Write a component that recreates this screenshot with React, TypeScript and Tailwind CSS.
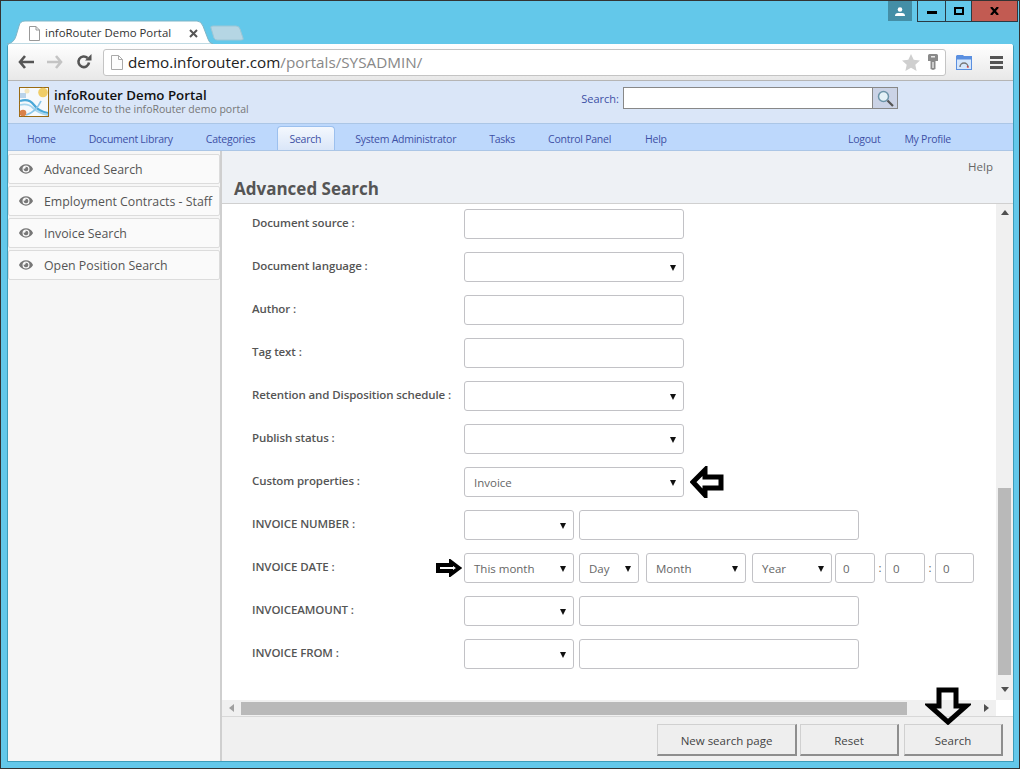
import React from 'react';
import { FaEye } from 'react-icons/fa';

const font = { fontFamily: '"Open Sans", "Noto Sans", sans-serif' };

function Caret({ className = '' }: { className?: string }) {
  return (
    <svg width="6" height="7" viewBox="0 0 6 7" className={className}>
      <path d="M0 1h6L3 7z" fill="#111" />
    </svg>
  );
}

function Select({ value, width }: { value?: string; width: string }) {
  return (
    <div className={`${width} h-[30px] shrink-0 rounded-[3px] border border-[#c2c2c6] bg-white flex items-center justify-between pl-[9px] pr-[7px] text-[11.5px] text-[#666]`}>
      <span className="pt-[2px]">{value}</span>
      <Caret />
    </div>
  );
}

function TextBox({ value, width }: { value?: string; width: string }) {
  return (
    <div className={`${width} h-[30px] shrink-0 rounded-[3px] border border-[#c2c2c6] bg-white flex items-center px-[7px] pt-[2px] text-[11.5px] text-[#666]`}>
      {value}
    </div>
  );
}

function Row({ label, children }: { label: string; children: React.ReactNode }) {
  return (
    <div className="flex h-[30px] items-start mb-[13px]">
      <div className="w-[212px] shrink-0 text-[11.5px] tracking-[-0.1px] leading-[28px] font-semibold text-[#555] whitespace-nowrap">{label}</div>
      {children}
    </div>
  );
}

function SideItem({ label }: { label: string }) {
  return (
    <div className="h-[30px] mb-[2px] rounded-[2px] border border-[#dcdcdc] bg-[#fafafa] flex items-center pl-[10px] text-[12.350px] text-[#555] whitespace-nowrap">
      <FaEye className="w-[14px] h-[14px] text-[#777] mr-[11px] shrink-0" />
      <span className="pt-[3px]">{label}</span>
    </div>
  );
}

function NavLink({ label, className = '' }: { label: string; className?: string }) {
  return <span className={`text-[10.5px] tracking-[-0.25px] text-[#3d50a5] whitespace-nowrap ${className}`}>{label}</span>;
}

function FooterButton({ label, width }: { label: string; width: string }) {
  return (
    <div className={`${width} h-[32px] pt-[2px] flex items-center justify-center bg-[#eeeeee] border border-[#d0d0d0] border-r-2 border-b-2 border-r-[#8e8e8e] border-b-[#8e8e8e] text-[11.5px] text-[#444]`}>
      {label}
    </div>
  );
}

// hand-drawn outline arrows sitting on top of the page
function Arrow({ d, className, width, height, stroke = 4 }: { d: string; className: string; width: number; height: number; stroke?: number }) {
  return (
    <svg width={width} height={height} viewBox={`0 0 ${width} ${height}`} className={`absolute ${className}`}>
      <path d={d} fill="none" stroke="#000" strokeWidth={stroke} strokeLinejoin="miter" />
    </svg>
  );
}

export default function App() {
  return (
    <div style={font} className="relative w-[1020px] h-[769px] overflow-hidden bg-[#63c8ea] border border-[#333] flex flex-col">
      {/* tab strip */}
      <div className="h-[43px] shrink-0 relative">
        <svg width="240" height="24" viewBox="0 0 240 24" className="absolute left-[5px] top-[19px]">
          <path d="M207 6h23q3 0 4 3l3 9q1 2-2 2h-24q-2 0-3-2l-3-10q-1-2 2-2z" fill="#b5d6e4" stroke="#9cc6d6" />
          <path d="M1 24q7-1 9-8l3-10q1-5 6-5h172q4 0 6 5l5 13q1 4 5 5z" fill="#fff" stroke="#7fb5c7" />
        </svg>
        <div className="absolute left-[27px] top-[24px] flex items-center h-[16px]">
          <svg width="13" height="15" viewBox="0 0 13 15">
            <path d="M1.500.5h6.500l3.500 3.500v10.500h-10z M8 .5v3.500h3.500" fill="#fff" stroke="#999" />
          </svg>
          <span className="ml-[4px] text-[11.400px] text-[#333] whitespace-nowrap">infoRouter Demo Portal</span>
        </div>
        <svg width="9" height="9" viewBox="0 0 9 9" className="absolute left-[188px] top-[28px]">
          <path d="M1 1l7 7M8 1l-7 7" stroke="#555" strokeWidth="2" />
        </svg>
        {/* window buttons */}
        <div className="absolute left-[887px] top-0 w-[24px] h-[20px] bg-[#448ea6] flex items-center justify-center">
          <svg width="10" height="9" viewBox="0 0 10 9">
            <circle cx="5" cy="2.500" r="2.300" fill="#fff" />
            <path d="M0 9q0-3 3-3h4q3 0 3 3z" fill="#fff" />
          </svg>
        </div>
        <div className="absolute left-[916px] top-0 flex h-[21px] border border-t-0 border-[#2a3a44]">
          <div className="w-[28px] flex items-center justify-center border-r border-[#2a3a44]">
            <div className="w-[10px] h-[3px] bg-black mt-[3px]" />
          </div>
          <div className="w-[25px] flex items-center justify-center">
            <div className="w-[10px] h-[8px] border-2 border-black" />
          </div>
          <div className="w-[46px] bg-[#c25b52] flex items-center justify-center border-l border-[#2a3a44]">
            <svg width="9" height="8" viewBox="0 0 9 8">
              <path d="M1 0l7 8M8 0l-7 8" stroke="#000" strokeWidth="2.200" />
            </svg>
          </div>
        </div>
      </div>

      {/* browser frame */}
      <div className="ml-[6px] mr-[5px] h-[718px] shrink-0 flex flex-col rounded-t-[3px] overflow-hidden border-l border-r border-b border-[#3c9cb9] bg-white">
        {/* toolbar */}
        <div className="h-[37px] shrink-0 flex items-center bg-gradient-to-b from-[#ffffff] to-[#e8e8e8] border-b border-[#b5b5b5]">
          <svg width="16" height="14" viewBox="0 0 16 14" className="ml-[10px]">
            <path d="M7 1L2 7l5 6M2 7h14" fill="none" stroke="#555" strokeWidth="2.600" />
          </svg>
          <svg width="16" height="14" viewBox="0 0 16 14" className="ml-[13px]">
            <path d="M9 1l5 6-5 6M14 7H0" fill="none" stroke="#c4c4c4" strokeWidth="2.600" />
          </svg>
          <svg width="16" height="16" viewBox="0 0 16 16" className="ml-[13px]">
            <path d="M13 8.500A5.300 5.300 0 1 1 11.500 4" fill="none" stroke="#555" strokeWidth="2.600" />
            <path d="M9 6.500h6.500V0z" fill="#555" />
          </svg>
          <div className="ml-[11px] w-[843px] h-[27px] bg-white border border-[#c4c4c4] rounded-[3px] flex items-center pl-[7px] pr-[7px]">
            <svg width="12" height="15" viewBox="0 0 12 15">
              <path d="M.5.500h7l4 4v10h-11z M7.500.500v4h4" fill="#fdfdfd" stroke="#aaa" />
            </svg>
            <span className="ml-[5px] text-[15.250px] text-[#222] whitespace-nowrap">demo.inforouter.com<span className="text-[#888]">/portals/SYSADMIN/</span></span>
            <svg width="18" height="17" viewBox="0 0 18 17" className="ml-auto">
              <path d="M9 0l2.700 5.800 6.300.7-4.700 4.200 1.300 6.300L9 13.800 3.400 17l1.300-6.300L0 6.500l6.300-.7z" fill="#cfcfcf" />
            </svg>
            <svg width="10" height="16" viewBox="0 0 10 16" className="ml-[8px]">
              <path d="M1.500 0h7Q10 0 10 1.500V7H7.500v8L5 16l-2.500-1V7H0V1.500Q0 0 1.500 0z" fill="#8a8a8a" />
              <path d="M4.300 8h1.400v6H4.300zM3 2h4v1.500H3z" fill="#e8e8e8" />
            </svg>
          </div>
          <svg width="16" height="15" viewBox="0 0 16 15" className="ml-[10px]">
            <rect x=".5" y="1.500" width="15" height="13" fill="#d5e6fb" stroke="#5a8fe0" />
            <path d="M.5 0h7v1.500h8v3H.5z" fill="#5a8fe0" />
            <path d="M4 12a4 4 0 0 1 8 0" fill="none" stroke="#777" strokeWidth="1.500" />
            <path d="M11 11.500l1.500 1" stroke="#d33" strokeWidth="1.500" />
          </svg>
          <div className="ml-[18px] w-[13px] flex flex-col gap-[2px]">
            <div className="h-[3px] bg-[#555]" />
            <div className="h-[3px] bg-[#555]" />
            <div className="h-[3px] bg-[#555]" />
          </div>
        </div>

        {/* portal header */}
        <div className="h-[42px] shrink-0 bg-[#dae6f8] flex items-center pl-[11px] relative">
          <svg width="30" height="30" viewBox="0 0 30 30" className="shrink-0">
            <rect x=".5" y=".5" width="29" height="29" fill="#f6f9fc" stroke="#9a6a12" />
            <path d="M1 6h6v5H1z" fill="#b9d3ea" />
            <circle cx="8" cy="4" r="2.500" fill="#f3e6bf" />
            <circle cx="24" cy="5.500" r="4.800" fill="#f0cd68" />
            <path d="M1 14q9-3 14 4t14 8" fill="none" stroke="#4aa8d8" strokeWidth="2.200" />
            <path d="M1 18q8-2 13 3t15 7" fill="none" stroke="#a5d5ee" strokeWidth="1.800" />
            <path d="M7 28q10-3 15-14" fill="none" stroke="#8bc7ea" strokeWidth="1.800" />
            <circle cx="4" cy="26" r="3.300" fill="#d9814a" />
          </svg>
          <div className="ml-[5px] flex flex-col -mt-[2px]">
            <span className="text-[13.300px] leading-[16px] font-semibold text-[#111] whitespace-nowrap">infoRouter Demo Portal</span>
            <span className="text-[10.5px] leading-[13px] text-[#777] whitespace-nowrap">Welcome to the infoRouter demo portal</span>
          </div>
          <span className="ml-auto self-start mt-[7px] h-[22px] leading-[22px] text-[11px] text-[#3d50a5]">Search:</span>
          <div className="ml-[4px] self-start mt-[6px] w-[250px] h-[22px] bg-white border border-[#888]" />
          <div className="self-start mt-[6px] w-[25px] h-[22px] bg-[#cbd3e6] border border-l-0 border-[#888] flex items-center justify-center mr-[115px]">
            <svg width="17" height="17" viewBox="0 0 17 17">
              <circle cx="6.500" cy="6.500" r="5" fill="#e4f1f7" stroke="#6d94a8" strokeWidth="1.500" />
              <path d="M10.500 10.500L16 16" stroke="#555" strokeWidth="2.200" />
            </svg>
          </div>
        </div>

        {/* nav */}
        <div className="h-[28px] shrink-0 bg-[#bdd8fc] border-t border-b border-[#abc6e6] flex items-end pl-[19px]">
          <div className="flex items-center h-full pt-[5px]">
            <NavLink label="Home" className="mr-[33px]" />
            <NavLink label="Document Library" className="mr-[33px]" />
            <NavLink label="Categories" className="mr-[22px]" />
          </div>
          <div className="h-[24px] w-[58px] pt-[3px] pr-[2px] bg-gradient-to-b from-[#f4f8fe] to-[#dae6f8] border border-b-0 border-[#9cc0ee] rounded-t-[4px] flex items-center justify-center">
            <NavLink label="Search" />
          </div>
          <div className="flex items-center h-full ml-[20px] pt-[5px]">
            <NavLink label="System Administrator" className="mr-[33px]" />
            <NavLink label="Tasks" className="mr-[33px]" />
            <NavLink label="Control Panel" className="mr-[34px]" />
            <NavLink label="Help" />
          </div>
          <div className="flex items-center h-full ml-auto pr-[62px] pt-[5px]">
            <NavLink label="Logout" className="mr-[24px]" />
            <NavLink label="My Profile" />
          </div>
        </div>

        {/* body */}
        <div className="flex-1 min-h-0 flex">
          <aside className="w-[214px] shrink-0 bg-[#f6f6f6] border-r-2 border-[#cfcfcf] pt-[3px]">
            <SideItem label="Advanced Search" />
            <SideItem label="Employment Contracts - Staff" />
            <SideItem label="Invoice Search" />
            <SideItem label="Open Position Search" />
          </aside>
          <main className="flex-1 min-w-0 flex flex-col bg-white">
            <div className="h-[53px] shrink-0 bg-[#eef1f5] border-b border-[#d0d0d0] relative flex items-end pl-[12px] pb-[2px]">
              <span className="absolute right-[20px] top-[7px] text-[11.5px] text-[#666]">Help</span>
              <h1 className="text-[17px] leading-[24px] font-bold text-[#555]">Advanced Search</h1>
            </div>
            <div className="flex-1 min-h-0 flex">
              <div className="flex-1 min-w-0 pt-[5px] pl-[30px] overflow-hidden">
                <Row label="Document source :"><TextBox width="w-[220px]" /></Row>
                <Row label="Document language :"><Select width="w-[220px]" /></Row>
                <Row label="Author :"><TextBox width="w-[220px]" /></Row>
                <Row label="Tag text :"><TextBox width="w-[220px]" /></Row>
                <Row label="Retention and Disposition schedule :"><Select width="w-[220px]" /></Row>
                <Row label="Publish status :"><Select width="w-[220px]" /></Row>
                <Row label="Custom properties :"><Select value="Invoice" width="w-[220px]" /></Row>
                <Row label="INVOICE NUMBER :">
                  <Select width="w-[110px]" />
                  <div className="w-[5px]" />
                  <TextBox width="w-[280px]" />
                </Row>
                <Row label="INVOICE DATE :">
                  <div className="flex items-center text-[11.5px] text-[#666]">
                    <Select value="This month" width="w-[110px]" />
                    <div className="w-[5px]" />
                    <Select value="Day" width="w-[60px]" />
                    <div className="w-[7px]" />
                    <Select value="Month" width="w-[100px]" />
                    <div className="w-[6px]" />
                    <Select value="Year" width="w-[80px]" />
                    <div className="w-[3px]" />
                    <TextBox value="0" width="w-[40px]" />
                    <span className="w-[10px] text-center">:</span>
                    <TextBox value="0" width="w-[40px]" />
                    <span className="w-[10px] text-center">:</span>
                    <TextBox value="0" width="w-[39px]" />
                  </div>
                </Row>
                <Row label="INVOICEAMOUNT :">
                  <Select width="w-[110px]" />
                  <div className="w-[5px]" />
                  <TextBox width="w-[280px]" />
                </Row>
                <Row label="INVOICE FROM :">
                  <Select width="w-[110px]" />
                  <div className="w-[5px]" />
                  <TextBox width="w-[280px]" />
                </Row>
              </div>
              {/* vertical scrollbar */}
              <div className="w-[17px] shrink-0 bg-[#f0f0f0] flex flex-col items-center">
                <svg width="8" height="5" viewBox="0 0 8 5" className="mt-[6px]"><path d="M4 0l4 5H0z" fill="#505050" /></svg>
                <div className="mt-[273px] w-[13px] h-[187px] bg-[#b9b9b9]" />
                <svg width="8" height="5" viewBox="0 0 8 5" className="mt-[12px]"><path d="M0 0h8L4 5z" fill="#505050" /></svg>
              </div>
            </div>
            {/* horizontal scrollbar */}
            <div className="h-[16px] shrink-0 flex">
              <div className="flex-1 bg-[#f0f0f0] flex items-center pl-[7px]">
                <svg width="5" height="8" viewBox="0 0 5 8"><path d="M5 0v8L0 4z" fill="#a0a0a0" /></svg>
                <div className="ml-[7px] w-[666px] h-[13px] bg-[#b9b9b9]" />
                <svg width="5" height="8" viewBox="0 0 5 8" className="ml-[77px]"><path d="M0 0v8l5-4z" fill="#505050" /></svg>
              </div>
              <div className="w-[17px] bg-white" />
            </div>
            {/* footer */}
            <div className="h-[45px] shrink-0 bg-[#f0f0f0] border-t border-[#d8d8d8] flex justify-end items-start pt-[7px] pr-[10px]">
              <FooterButton label="New search page" width="w-[140px]" />
              <div className="w-[3px]" />
              <FooterButton label="Reset" width="w-[99px]" />
              <div className="w-[5px]" />
              <FooterButton label="Search" width="w-[99px]" />
            </div>
          </main>
        </div>
      </div>
      <div className="flex-1 min-h-0 bg-[#63c8ea]" />

      {/* annotation arrows */}
      <Arrow className="left-[689px] top-[465px]" width={34} height={32} stroke={5} d="M3 16L15 4v7h16v11H15v7z" />
      <Arrow className="left-[435px] top-[558px]" width={26} height={18} stroke={4} d="M23 9L15 3v3H2v6h13v3z" />
      <Arrow className="left-[924px] top-[686px]" width={46} height={38} stroke={5} d="M14 3h17v16h10L23 35 5 19h9z" />
    </div>
  );
}
